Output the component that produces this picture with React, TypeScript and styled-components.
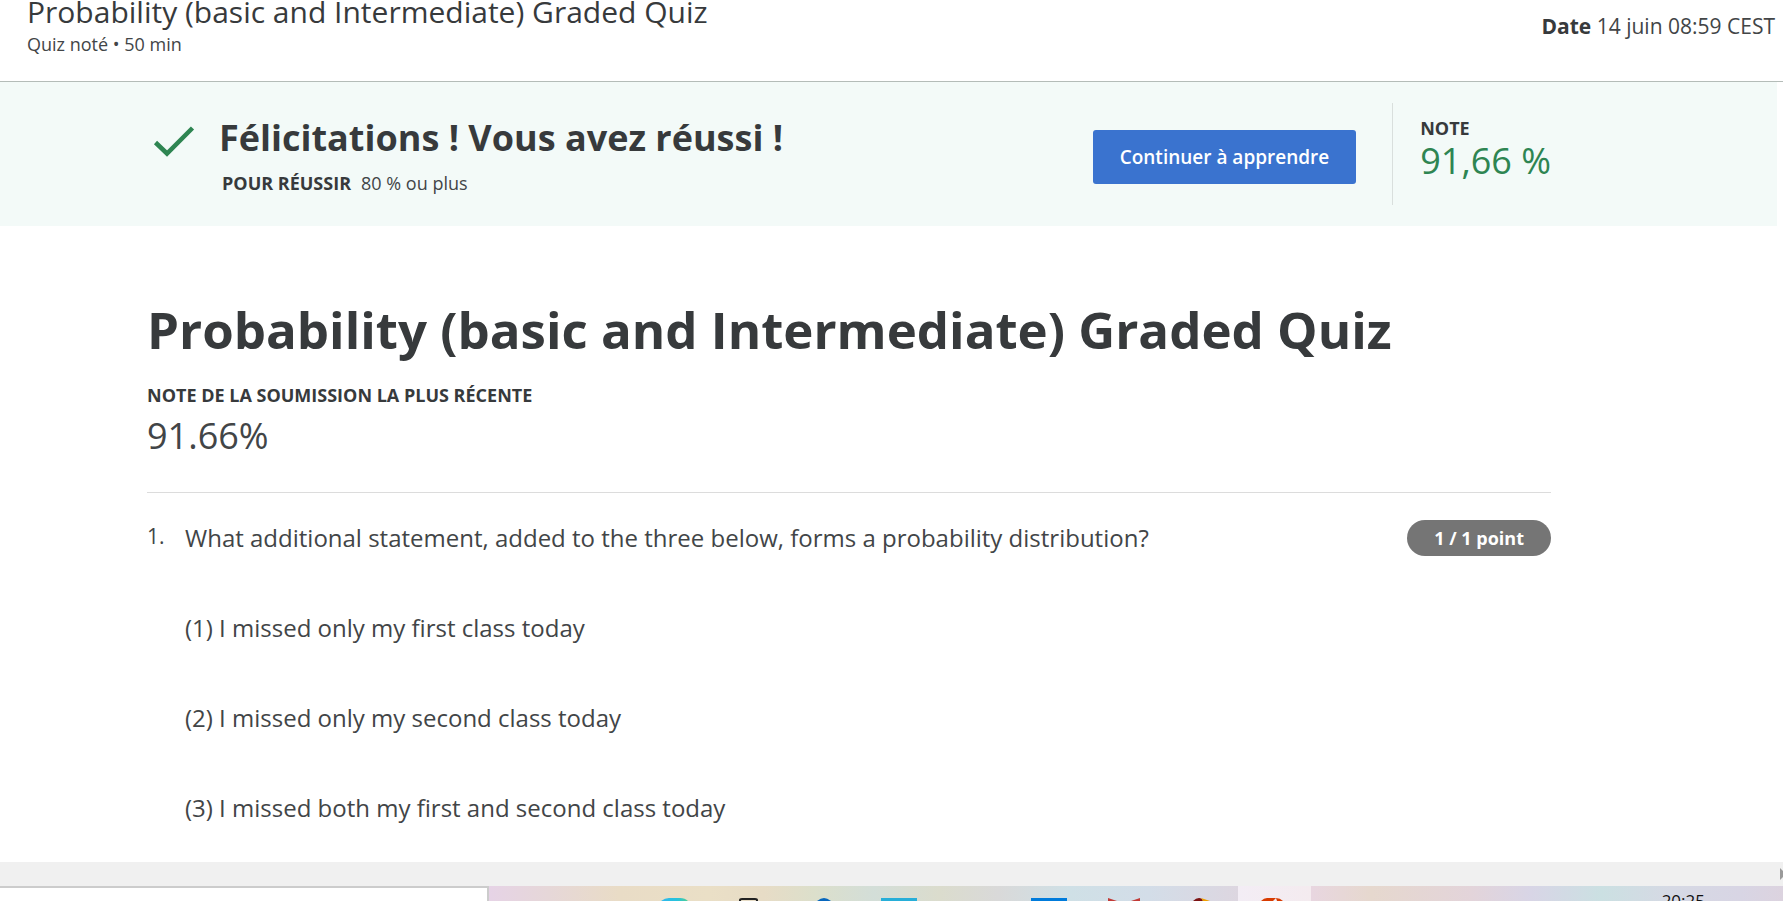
import React from "react";
import styled, { createGlobalStyle } from "styled-components";

const GlobalStyle = createGlobalStyle`
  *, *::before, *::after { box-sizing: border-box; }
  body {
    margin: 0;
    background: #fff;
    color: #424547;
    font-family: "Open Sans", "Noto Sans", sans-serif;
    font-size: 18px;
    line-height: 24px;
  }
  h1, h2, p { margin: 0; padding: 0; }
  h1, h2, strong { color: #373a3c; }
  svg { display: block; }
`;

const Screen = styled.div`
  display: flex;
  flex-direction: column;
  height: 100vh;
  overflow: hidden;
`;

const Viewport = styled.div`
  flex: 1;
  min-height: 0;
  overflow: hidden;
`;

const Header = styled.header`
  display: flex;
  justify-content: space-between;
  height: 82px;
  padding: 0 8px 0 27px;
  border-bottom: 1px solid #b4bcb8;
`;

const HeaderTitle = styled.h2`
  font-size: 30px;
  font-weight: 400;
  line-height: 24px;
`;

const HeaderMeta = styled.p`
  padding-top: 8px;
`;

const HeaderDate = styled.p`
  padding-top: 14px;
  font-size: 21px;
`;

const Strong = styled.strong`
  font-weight: 700;
`;

const Banner = styled.section`
  display: flex;
  align-items: center;
  height: 144px;
  margin-right: 6px;
  padding: 0 226px 0 153px;
  background: #f3faf8;
`;

const CheckIcon = styled.svg`
  width: 42px;
  height: 32px;
  margin-bottom: 26px;
`;

const BannerText = styled.div`
  flex: 1;
  padding-left: 24px;
`;

const BannerTitle = styled.h2`
  font-size: 36px;
  font-weight: 700;
  line-height: 48px;
`;

const Requirement = styled.p`
  display: flex;
  gap: 10px;
  padding: 9px 0 0 3px;
`;

const ContinueButton = styled.button`
  height: 54px;
  margin-top: 6px;
  padding: 0 27px;
  border: 0;
  border-radius: 3px;
  background: #3a73cf;
  color: #fff;
  font: 600 19px/24px "Open Sans", sans-serif;
`;

const Grade = styled.div`
  height: 102px;
  margin-left: 36px;
  padding: 13px 0 0 27px;
  border-left: 1px solid #d9dfdd;
`;

const Label = styled.p`
  color: #373a3c;
  font-weight: 700;
`;

const GradeValue = styled.p<{ $passed?: boolean }>`
  color: ${(p) => (p.$passed ? "#2e8552" : "inherit")};
  font-size: 36px;
  line-height: 42px;
`;

const Main = styled.main`
  padding: 71px 232px 0 147px;
`;

const PageTitle = styled.h1`
  font-size: 51px;
  font-weight: 700;
  line-height: 64px;
`;

const Latest = styled.section`
  display: grid;
  gap: 8px;
  padding: 22px 0 35px;
  border-bottom: 1px solid #dcdcdc;
`;

const Question = styled.section`
  display: flex;
  align-items: flex-start;
  padding-top: 27px;
`;

const QuestionNumber = styled.span`
  width: 38px;
  padding-top: 4px;
  font-size: 21px;
`;

const Statements = styled.div`
  display: grid;
  flex: 1;
  gap: 54px;
  font-size: 24px;
  line-height: 36px;
`;

const Points = styled.span`
  padding: 6px 27px;
  border-radius: 18px;
  background: #757575;
  color: #fff;
  font-weight: 700;
`;

const ScrollTrack = styled.div`
  display: flex;
  justify-content: flex-end;
  align-items: center;
  height: 24px;
  background: #f0f0f0;
`;

const Taskbar = styled.footer`
  display: flex;
  height: 15px;
  overflow: hidden;
`;

const SearchBox = styled.input`
  width: 489px;
  height: 60px;
  border: 2px solid #cccccc;
  border-left: 0;
  background: #fff;
`;

const Apps = styled.div`
  flex: 1;
  background: linear-gradient(
    90deg,
    #e6d3e6 0,
    #e6d7d8 60px,
    #e9dcc6 130px,
    #eadfc6 220px,
    #e7dcc6 275px,
    #dcdfcb 325px,
    #d3ded8 385px,
    #dbdccd 450px,
    #d9d9d9 510px,
    #cfe0e6 580px,
    #d3dde8 660px,
    #ddd6e0 750px
  );
`;

const ActiveApp = styled.div`
  width: 73px;
  background: linear-gradient(90deg, #f3edf5, #f4ebef);
`;

const Tray = styled.div`
  display: flex;
  justify-content: flex-end;
  width: 472px;
  padding: 5px 78px 0 0;
  background: linear-gradient(
    90deg,
    #e8d6e0 0,
    #e6d8ce 60px,
    #e3d4da 160px,
    #d8d5e6 220px,
    #cbe0e2 290px,
    #d6d9e4 360px,
    #d8d5e4 430px,
    #dcd3df 472px
  );
  color: #111;
  font-size: 17px;
  line-height: 20px;
`;

const statements = [
  "What additional statement, added to the three below, forms a probability distribution?",
  "(1) I missed only my first class today",
  "(2) I missed only my second class today",
  "(3) I missed both my first and second class today",
];

export default function App() {
  return (
    <Screen>
      <GlobalStyle />
      <Viewport>
        <Header>
          <div>
            <HeaderTitle>Probability (basic and Intermediate) Graded Quiz</HeaderTitle>
            <HeaderMeta>Quiz noté • 50 min</HeaderMeta>
          </div>
          <HeaderDate>
            <Strong>Date</Strong> 14 juin 08:59 CEST
          </HeaderDate>
        </Header>

        <Banner>
          <CheckIcon viewBox="0 0 42 32" aria-hidden="true">
            <path d="M2.500 17.500 L14 28.500 L39.500 3" fill="none" stroke="#2e8552" strokeWidth="4.500" />
          </CheckIcon>
          <BannerText>
            <BannerTitle>Félicitations ! Vous avez réussi !</BannerTitle>
            <Requirement>
              <Strong>POUR RÉUSSIR</Strong>
              <span>80 % ou plus</span>
            </Requirement>
          </BannerText>
          <ContinueButton type="button">Continuer à apprendre</ContinueButton>
          <Grade>
            <Label>NOTE</Label>
            <GradeValue $passed>91,66 %</GradeValue>
          </Grade>
        </Banner>

        <Main>
          <PageTitle>Probability (basic and Intermediate) Graded Quiz</PageTitle>
          <Latest>
            <Label>NOTE DE LA SOUMISSION LA PLUS RÉCENTE</Label>
            <GradeValue>91.66%</GradeValue>
          </Latest>
          <Question>
            <QuestionNumber>1.</QuestionNumber>
            <Statements>
              {statements.map((text) => (
                <p key={text}>{text}</p>
              ))}
            </Statements>
            <Points>1 / 1 point</Points>
          </Question>
        </Main>
      </Viewport>

      <ScrollTrack>
        <svg width="3" height="12" viewBox="0 0 3 12" aria-hidden="true">
          <path d="M0 0 L3 3 V9 L0 12 Z" fill="#9a9a9a" />
        </svg>
      </ScrollTrack>

      <Taskbar>
        <SearchBox type="text" aria-label="Rechercher" />
        <Apps>
          <svg width="740" height="15" viewBox="489 0 740 15" aria-hidden="true">
            <defs>
              <linearGradient id="edge">
                <stop offset="0" stopColor="#2fb8ee" />
                <stop offset="0.6" stopColor="#27c3dc" />
                <stop offset="1" stopColor="#4fce94" />
              </linearGradient>
            </defs>
            <path d="M661 15 Q665 12 669 12 H680 Q685 12 688 15 Z" fill="url(#edge)" />
            <path d="M740 15 V14 Q740 13 742 13 H755 Q757 13 757 14 V15" fill="none" stroke="#222" strokeWidth="2" />
            <path d="M817 15 Q821 12 824 12 Q827 12 831 15 Z" fill="#0766bd" />
            <rect x="881" y="12" width="36" height="3" fill="#27aed8" />
            <rect x="1031" y="12" width="36" height="3" fill="#007bdb" />
            <path d="M1108 12 L1117 15 H1108 Z M1140 12 L1131 15 H1140 Z" fill="#c23a36" />
            <path d="M1193 15 Q1196 12 1199 12 Q1202 12 1203 15 Z" fill="#7c1212" />
            <path d="M1201 12 L1210 15 H1203 Z" fill="#f0a000" />
          </svg>
        </Apps>
        <ActiveApp>
          <svg width="73" height="15" viewBox="1238 0 73 15" aria-hidden="true">
            <path d="M1261 15 Q1264 12 1267 12 H1276 L1273 15 Z" fill="#d83b01" />
            <path d="M1276 12 Q1280 12 1283 15 H1277 Z" fill="#d83b01" />
          </svg>
        </ActiveApp>
        <Tray>
          <time>20:25</time>
        </Tray>
      </Taskbar>
    </Screen>
  );
}
